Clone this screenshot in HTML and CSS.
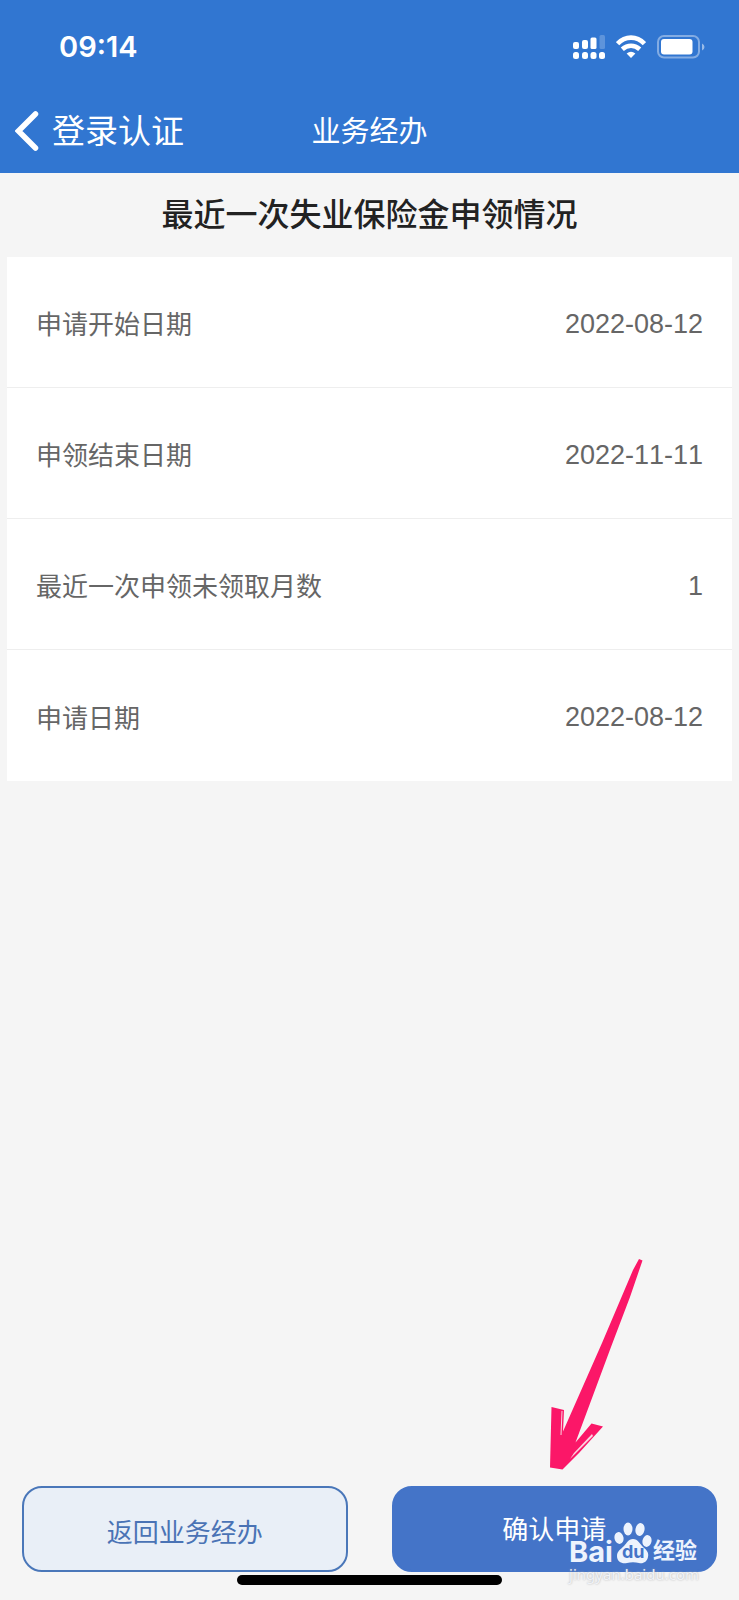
FILE: index.html
```html
<!DOCTYPE html>
<html lang="zh-CN">
<head>
<meta charset="utf-8">
<meta name="viewport" content="width=device-width, initial-scale=1">
<title>业务经办</title>
<link rel="stylesheet" href="styles.css">
</head>
<body>
<div class="screen">
  <header class="header">
    <div class="status">
      <time class="clock">09:14</time>
      <div class="status-icons">
        <svg width="32" height="24" viewBox="0 0 32 24" fill="#fff" aria-hidden="true">
          <rect x="0" y="7" width="6" height="7" rx="2"/>
          <rect x="9" y="5" width="6" height="9" rx="2"/>
          <rect x="17.500" y="2.500" width="6" height="11.500" rx="1.500"/>
          <rect x="26.500" y="0" width="5.500" height="14" rx="1.500" opacity=".22"/>
          <rect x="0" y="17" width="6" height="7" rx="2.500"/>
          <rect x="9" y="17" width="6" height="7" rx="2.500"/>
          <rect x="17.500" y="17" width="6" height="7" rx="2.500"/>
          <rect x="26" y="17" width="6" height="7" rx="2.500"/>
        </svg>
        <svg width="30" height="24" viewBox="1 0 30 24" aria-hidden="true">
          <g fill="none" stroke="#fff" stroke-width="4.600">
            <path d="M2.600 8.700Q8.300 2.600 16 2.600T29.400 8.700"/>
            <path d="M7.300 14.200Q11.200 10.700 16 10.700T24.700 14.200"/>
          </g>
          <path d="M11.600 18.500Q16 14.800 20.400 18.500L16 23Z" fill="#fff"/>
        </svg>
        <svg width="48" height="24" viewBox="0 0 48 24" aria-hidden="true">
          <rect x="1" y="1" width="41" height="21.500" rx="6" fill="none" stroke="#fff" stroke-opacity=".4" stroke-width="2"/>
          <rect x="4" y="4" width="31.500" height="15.500" rx="3" fill="#fff"/>
          <path d="M45 8.500q2.500 1 2.500 3.500T45 15.500Z" fill="#fff" opacity=".5"/>
        </svg>
      </div>
    </div>
    <nav class="nav">
      <a class="back" href="#">
        <svg width="24" height="40" viewBox="0 0 24 40" fill="none" stroke="#fff" stroke-width="5.500" stroke-linecap="round" aria-hidden="true"><path d="M20.500 3L3.500 20L20.500 37"/></svg>
        <span>登录认证</span>
      </a>
      <span class="nav-title">业务经办</span>
    </nav>
  </header>

  <main class="content">
    <h1 class="title">最近一次失业保险金申领情况</h1>
    <dl class="card">
      <div class="row"><dt>申请开始日期</dt><dd>2022-08-12</dd></div>
      <div class="row"><dt>申领结束日期</dt><dd>2022-11-11</dd></div>
      <div class="row"><dt>最近一次申领未领取月数</dt><dd>1</dd></div>
      <div class="row"><dt>申请日期</dt><dd>2022-08-12</dd></div>
    </dl>
  </main>

  <footer class="footer">
    <div class="actions">
      <button class="btn btn-outline" type="button">返回业务经办</button>
      <button class="btn btn-primary" type="button">确认申请</button>
    </div>
    <div class="home-bar"></div>

    <svg class="arrow" width="100" height="214" viewBox="0 0 100 214" aria-hidden="true">
      <path fill="#fb1768" d="M91 2L94.500 3.500L82 40L63 90L27.500 185.500L43.500 166.500L55 169.500L31 196L14.500 212.500L2 210.500L3.500 150L16 153L15 174.500L54 86L85 13Z"/>
      <path fill="none" stroke="#fbd3e0" d="M14 154L13 178"/>
      <path fill="#fbd3e0" d="M44 177L45 179L22 202L26 196Z"/>
    </svg>

    <div class="watermark">
      <div class="wm-logo">
        <span class="wm-bai">Bai</span>
        <span class="wm-paw">
          <svg width="38" height="42" viewBox="0 0 38 42" fill="#edf3fd" aria-hidden="true">
            <ellipse cx="5" cy="16" rx="4.500" ry="6" transform="rotate(-12 5 16)"/>
            <ellipse cx="14" cy="7" rx="4.500" ry="6.500"/>
            <ellipse cx="26" cy="7.500" rx="4.500" ry="6.500" transform="rotate(12 26 7.500)"/>
            <ellipse cx="33" cy="19" rx="4.500" ry="6" transform="rotate(12 33 19)"/>
            <path d="M19 17C24 17 26 22 29 25C33 28 35 31 34 35C33 40 29 42 25 41C21 40 17 40 13 41C8 42 3 40 3 34C3 29 7 27 10 24C13 21 14 17 19 17Z"/>
          </svg>
          <span class="wm-du">du</span>
        </span>
        <span class="wm-cn">经验</span>
      </div>
      <div class="wm-url">jingyan.baidu.com</div>
    </div>
  </footer>
</div>
</body>
</html>
```
FILE: styles.css
```css
* { box-sizing: border-box; }
body {
  margin: 0;
  background: #f5f5f5;
  font-family: "Liberation Sans", "Noto Sans CJK SC", sans-serif;
}
.screen { min-height: 100vh; display: flex; flex-direction: column; }
.header { background: #3176d1; color: #fff; }
.status {
  height: 90px;
  padding: 4px 34px 0 59px;
  display: flex;
  align-items: center;
  justify-content: space-between;
}
.clock { font: 600 29px/36px Inter, sans-serif; }
.status-icons { display: flex; align-items: center; gap: 11px; }
.nav {
  height: 83px;
  padding: 0 15px 2px;
  display: grid;
  grid-template-columns: 1fr auto 1fr;
  align-items: center;
}
.back {
  display: flex;
  align-items: center;
  gap: 13px;
  color: inherit;
  text-decoration: none;
  font-size: 33px;
  line-height: 40px;
}
.back span, .nav-title { padding-top: 2px; }
.nav-title { font-size: 29px; line-height: 36px; }
.content { padding: 0 7px; }
.title {
  margin: 0;
  height: 84px;
  font-size: 32px;
  line-height: 84px;
  font-weight: 500;
  text-align: center;
  color: #222;
}
.card { margin: 0; background: #fff; }
.row {
  height: 131px;
  padding: 4px 29px 0;
  display: flex;
  align-items: center;
  justify-content: space-between;
  border-bottom: 1px solid #eee;
  color: #666;
  font-size: 26px;
}
.row:last-child { border-bottom: 0; }
.row dt { padding-bottom: 3px; }
.row dd { margin: 0; font-size: 27px; font-kerning: none; }
.footer { position: relative; margin-top: auto; padding: 0 22px 15px; }
.actions { display: grid; grid-template-columns: 1fr 1fr; gap: 44px; }
.btn {
  height: 86px;
  border: 2px solid #4a77b9;
  border-radius: 20px;
  font-family: inherit;
  font-size: 26px;
}
.btn-outline { background: #e9eff7; color: #4a73b5; padding-top: 3px; }
.btn-primary { background: #4474c8; border-color: #4474c8; color: #fff; padding-bottom: 4px; }
.home-bar {
  width: 38%;
  height: 10px;
  margin: 3px auto 0;
  border-radius: 5px;
  background: #000;
}
.arrow { position: absolute; right: 91px; bottom: 129px; }
.watermark { position: absolute; right: 40px; bottom: 16px; color: #edf3fd; }
.wm-logo { display: flex; align-items: flex-end; gap: 1px; height: 42px; }
.wm-bai { font: 700 29px/24px Inter, sans-serif; }
.wm-paw { position: relative; display: flex; }
.wm-du {
  position: absolute;
  left: 8px;
  bottom: 2px;
  font: 700 18px/20px Inter, sans-serif;
  color: #4474c8;
}
.wm-cn { font-size: 22px; line-height: 26px; font-weight: 700; }
.wm-url {
  font: 15px/20px "Noto Sans", sans-serif;
  color: #f1f3f8;
  text-shadow: 0 0 2px #aaa;
}
```
